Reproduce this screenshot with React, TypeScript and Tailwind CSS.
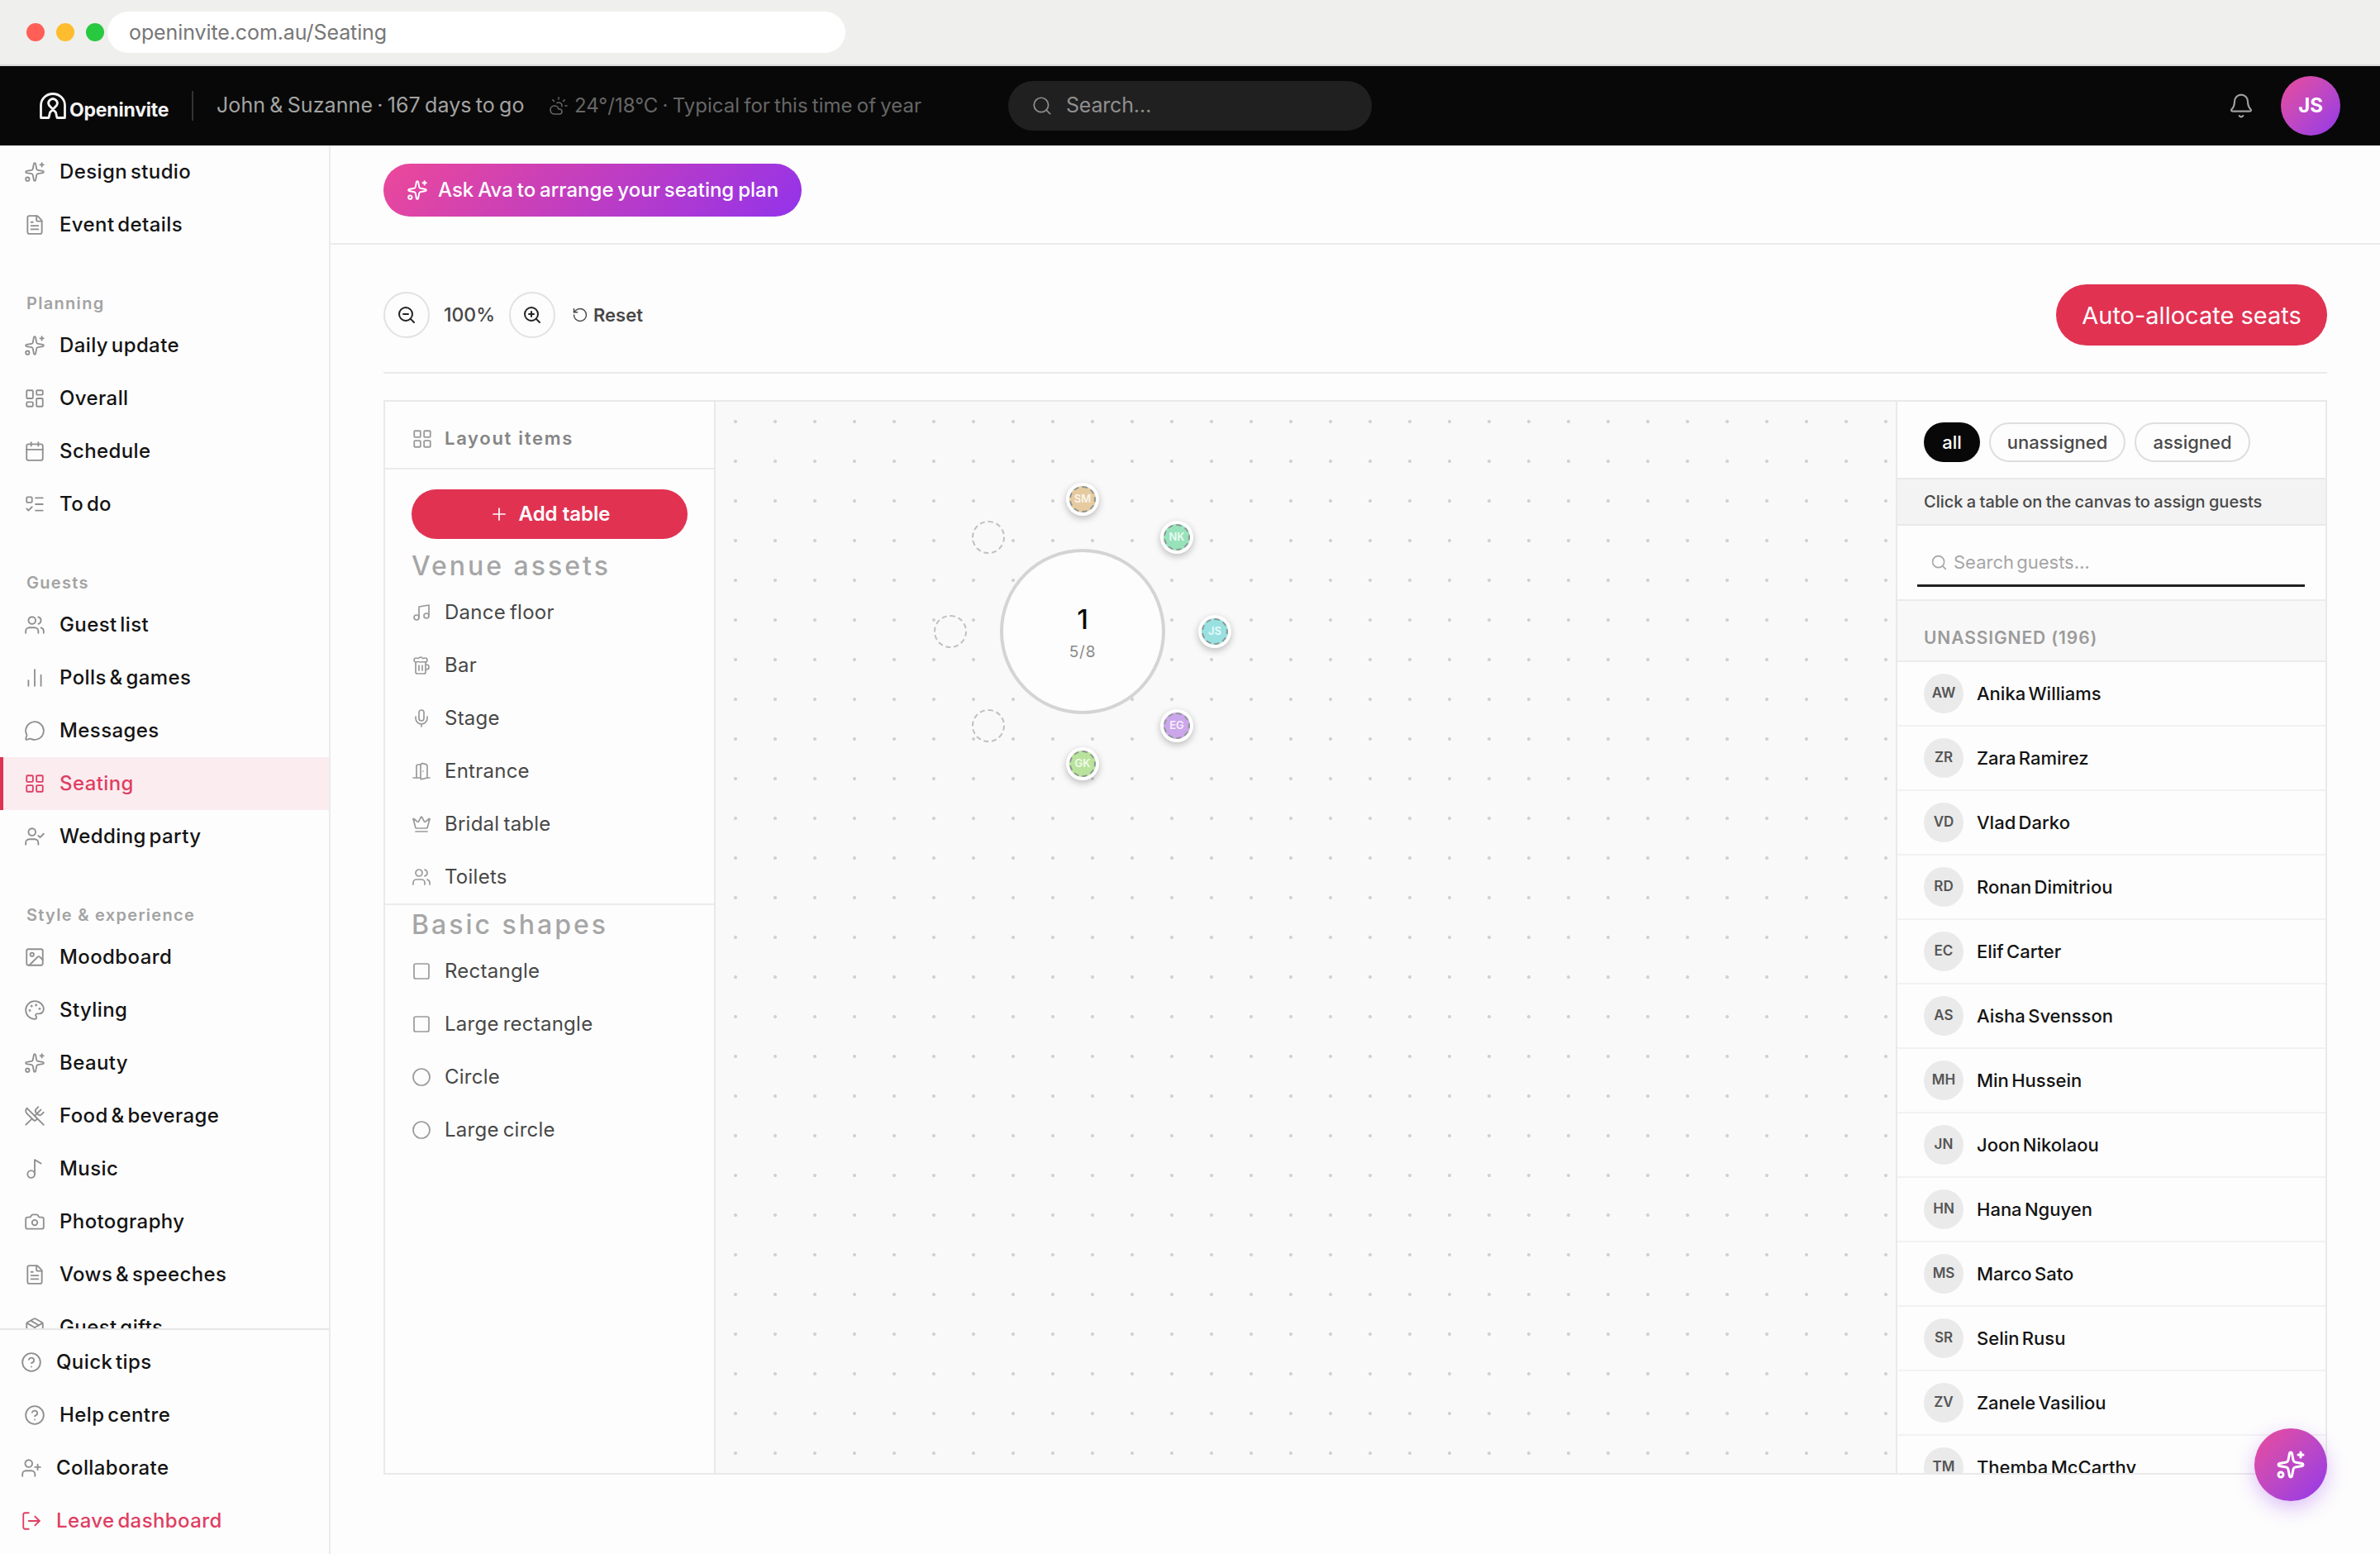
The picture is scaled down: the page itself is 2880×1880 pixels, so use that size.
import React from "react";
import {
  Beer, Bell, Calendar, Camera, ChartNoAxesColumn, Circle, CircleHelp, CloudSun, Crown, DoorOpen, FileText,
  Image, LayoutDashboard, LayoutGrid, ListTodo, LogOut, MessageCircle, Mic, Music, Music2, Package, Palette,
  Plus, RotateCcw, Search, Sparkles, Square, UserCheck, UserPlus, Users, UtensilsCrossed, ZoomIn, ZoomOut,
  type LucideIcon,
} from "lucide-react";

type Item = { icon: LucideIcon; label: string; active?: boolean };

const sections: { title?: string; items: Item[] }[] = [
  { items: [{ icon: Sparkles, label: "Design studio" }, { icon: FileText, label: "Event details" }] },
  {
    title: "Planning",
    items: [
      { icon: Sparkles, label: "Daily update" },
      { icon: LayoutDashboard, label: "Overall" },
      { icon: Calendar, label: "Schedule" },
      { icon: ListTodo, label: "To do" },
    ],
  },
  {
    title: "Guests",
    items: [
      { icon: Users, label: "Guest list" },
      { icon: ChartNoAxesColumn, label: "Polls & games" },
      { icon: MessageCircle, label: "Messages" },
      { icon: LayoutGrid, label: "Seating", active: true },
      { icon: UserCheck, label: "Wedding party" },
    ],
  },
  {
    title: "Style & experience",
    items: [
      { icon: Image, label: "Moodboard" },
      { icon: Palette, label: "Styling" },
      { icon: Sparkles, label: "Beauty" },
      { icon: UtensilsCrossed, label: "Food & beverage" },
      { icon: Music2, label: "Music" },
      { icon: Camera, label: "Photography" },
      { icon: FileText, label: "Vows & speeches" },
      { icon: Package, label: "Guest gifts" },
    ],
  },
];

const venueAssets: Item[] = [
  { icon: Music, label: "Dance floor" },
  { icon: Beer, label: "Bar" },
  { icon: Mic, label: "Stage" },
  { icon: DoorOpen, label: "Entrance" },
  { icon: Crown, label: "Bridal table" },
  { icon: Users, label: "Toilets" },
];

const basicShapes: Item[] = [
  { icon: Square, label: "Rectangle" },
  { icon: Square, label: "Large rectangle" },
  { icon: Circle, label: "Circle" },
  { icon: Circle, label: "Large circle" },
];

const guests = [
  "Anika Williams", "Zara Ramirez", "Vlad Darko", "Ronan Dimitriou", "Elif Carter", "Aisha Svensson",
  "Min Hussein", "Joon Nikolaou", "Hana Nguyen", "Marco Sato", "Selin Rusu", "Zanele Vasiliou", "Themba McCarthy",
];

const initials = (name: string) => name.split(" ").map((part) => part[0]).join("");

const seats = [
  { initials: "SM", place: "left-[140px] top-[-20px]", color: "bg-[#e6cba0]" },
  { initials: "NK", place: "left-[254px] top-[26px]", color: "bg-[#98e2bb]" },
  { initials: "JS", place: "left-[300px] top-[140px]", color: "bg-[#98e1e0]" },
  { initials: "EG", place: "left-[254px] top-[254px]", color: "bg-[#cba6ea]" },
  { initials: "GK", place: "left-[140px] top-[300px]", color: "bg-[#b9e39c]" },
  { place: "left-[26px] top-[254px]" },
  { place: "left-[-20px] top-[140px]" },
  { place: "left-[26px] top-[26px]" },
];

function BrowserBar() {
  return (
    <div className="flex h-20 shrink-0 items-center border-b-2 border-[#d9d9d7] bg-[#efefed] pl-8">
      <div className="flex gap-3.5">
        <span className="size-[22px] rounded-full bg-[#ff5f57]" />
        <span className="size-[22px] rounded-full bg-[#febc2e]" />
        <span className="size-[22px] rounded-full bg-[#28c840]" />
      </div>
      <div className="ml-1 flex h-[50px] w-[893px] items-center rounded-[25px] bg-white pt-0.5 pl-[26px] text-[25px] tracking-[-0.1px] text-[#777]">
        openinvite.com.au/Seating
      </div>
    </div>
  );
}

function Logo() {
  return (
    <div className="flex w-[157px] items-center gap-1">
      <svg viewBox="0 0 32 32" className="size-8 shrink-0" fill="none" stroke="#f4f4f4" strokeWidth="2.8" strokeLinejoin="round">
        <path d="M1.5 30.5V15.5a14.5 14 0 0 1 29 0v15H21l-1.5-6.5-8-8.5a5.2 5.2 0 1 1 9 0l-8 8.5-1.5 6.5z" />
      </svg>
      <span className="mt-2.5 text-[23px] leading-none font-bold tracking-[-0.2px] text-[#f4f4f4]">Openinvite</span>
    </div>
  );
}

function Header() {
  return (
    <header className="flex h-24 shrink-0 items-center bg-[#080808] pl-12">
      <div className="flex w-[1172px] items-center">
        <Logo />
        <span className="ml-[27px] h-9 w-0.5 bg-[#333]" />
        <span className="ml-7 w-[402px] text-[25px] tracking-[0.1px] whitespace-nowrap text-[#a3a3a3] [word-spacing:-2px]">
          John &amp; Suzanne · 167 days to go
        </span>
        <CloudSun className="size-6 text-[#666]" strokeWidth={1.6} />
        <span className="ml-[7px] text-[24px] whitespace-nowrap text-[#666] [word-spacing:-1.5px]">
          24°/18°C · Typical for this time of year
        </span>
      </div>
      <div className="flex h-[60px] w-[440px] items-center rounded-full bg-[#202020] pl-[28px] text-[25px] tracking-[-0.2px] text-[#8f8f8f]">
        <Search className="mr-[16px] size-[26px]" strokeWidth={1.6} />
        Search…
      </div>
      <Bell className="ml-auto size-8 text-[#a0a0a0]" strokeWidth={1.6} />
      <div className="mr-12 ml-8 flex size-[72px] items-center justify-center rounded-full bg-linear-to-br from-[#ec4899] to-[#9333ea] text-[24px] font-bold text-white">
        JS
      </div>
    </header>
  );
}

function NavRow({ icon: Icon, label, active }: Item) {
  return (
    <div
      className={
        active
          ? "flex h-16 shrink-0 items-center border-l-4 border-[#e03252] bg-[#fbecf0] pl-[25px] text-[#e03e62]"
          : "flex h-16 shrink-0 items-center pl-[29px] text-[#141414]"
      }
    >
      <Icon className={active ? "size-[26px]" : "size-[26px] text-[#8f8f8f]"} strokeWidth={1.7} />
      <span className="ml-[17px] text-[24px] font-medium tracking-[0.4px] [word-spacing:-3px]">{label}</span>
    </div>
  );
}

function FooterRow({ icon: Icon, label, tone, offset }: Item & { tone?: string; offset: string }) {
  return (
    <div className={`flex h-16 shrink-0 items-center ${offset} ${tone ?? "text-[#141414]"}`}>
      <Icon className={tone ? "size-[26px]" : "size-[26px] text-[#8f8f8f]"} strokeWidth={1.7} />
      <span className="ml-[17px] text-[24px] font-medium tracking-[0.4px] [word-spacing:-3px]">{label}</span>
    </div>
  );
}

function Sidebar() {
  return (
    <aside className="flex w-[400px] shrink-0 flex-col border-r-2 border-[#ebebeb] bg-[#fdfdfd]">
      <nav className="flex min-h-0 flex-1 flex-col overflow-hidden">
        {sections.map((section) => (
          <React.Fragment key={section.title ?? "top"}>
            {section.title && (
              <div className="h-[82px] shrink-0 pt-[49px] pl-8 text-[20px] leading-[28px] font-semibold tracking-[1.3px] text-[#a3a3a3]">
                {section.title}
              </div>
            )}
            {section.items.map((item) => (
              <NavRow key={item.label} {...item} />
            ))}
          </React.Fragment>
        ))}
      </nav>
      <div className="h-[273px] shrink-0 border-t-2 border-[#e6e6e6] pt-[7px]">
        <FooterRow icon={CircleHelp} label="Quick tips" offset="pl-[25px]" />
        <FooterRow icon={CircleHelp} label="Help centre" offset="pl-[29px]" />
        <FooterRow icon={UserPlus} label="Collaborate" offset="pl-[25px]" />
        <FooterRow icon={LogOut} label="Leave dashboard" offset="pl-[25px]" tone="text-[#e03e62]" />
      </div>
    </aside>
  );
}

function AssetRow({ icon: Icon, label }: Item) {
  return (
    <div className="flex h-16 items-center pl-8 text-[#484848]">
      <Icon className="size-6 text-[#9a9a9a]" strokeWidth={1.7} />
      <span className="ml-4 text-[24px] tracking-[0.25px] [word-spacing:-2px]">{label}</span>
    </div>
  );
}

function LayoutPanel() {
  return (
    <div className="flex w-[400px] shrink-0 flex-col border-r-2 border-[#e9e9e9] bg-[#fdfdfd]">
      <div className="flex h-[82px] items-center border-b-2 border-[#ebebeb] pt-[9px] pl-8 text-[22px] font-semibold tracking-[1.7px] text-[#858585]">
        <LayoutGrid className="mr-[14px] size-[26px] text-[#9a9a9a]" strokeWidth={1.7} />
        Layout items
      </div>
      <button className="mx-8 mt-6 flex h-[60px] items-center justify-center rounded-full bg-[#e13252] text-[24px] font-semibold text-white">
        <Plus className="mr-3 size-6" strokeWidth={1.7} />
        Add table
      </button>
      <div className="mt-[9px] flex h-12 items-center pl-8 text-[32px] font-medium tracking-[3px] text-[#a6a6a6]">Venue assets</div>
      {venueAssets.map((item) => (
        <AssetRow key={item.label} {...item} />
      ))}
      <div className="flex h-[50px] items-center border-t-2 border-[#ebebeb] pl-8 text-[32px] font-medium tracking-[3px] text-[#a6a6a6]">
        Basic shapes
      </div>
      {basicShapes.map((item) => (
        <AssetRow key={item.label} {...item} />
      ))}
    </div>
  );
}

function Canvas() {
  return (
    <div className="relative flex-1 bg-[#f9f9f9] bg-[radial-gradient(circle,#d2d2d2_1.6px,transparent_2.4px)] bg-size-[48px_48px]">
      <div className="absolute top-[118px] left-[284px] size-[320px]">
        <div className="absolute top-[60px] left-[60px] flex size-[200px] flex-col items-center justify-center rounded-full border-4 border-[#d4d4d4] bg-[#fdfdfd] pt-1.5">
          <span className="text-[33px] leading-10 font-medium text-[#0a0a0a]">1</span>
          <span className="mt-1 text-[19px] leading-8 tracking-[0.8px] text-[#8a8a8a]">5/8</span>
        </div>
        {seats.map((seat) =>
          seat.initials ? (
            <div key={seat.place} className={`absolute size-10 rounded-full bg-white p-1 shadow-[0_3px_8px_rgba(0,0,0,0.25)] ${seat.place}`}>
              <div className={`flex size-8 items-center justify-center rounded-full border-2 border-dashed border-[#8b9690] text-[13px] font-semibold text-white/80 ${seat.color}`}>
                {seat.initials}
              </div>
            </div>
          ) : (
            <div key={seat.place} className={`absolute size-10 rounded-full border-2 border-dashed border-[#c0c0c0] bg-[#f9f9f9] ${seat.place}`} />
          ),
        )}
      </div>
    </div>
  );
}

function GuestPanel() {
  return (
    <div className="flex w-[520px] shrink-0 flex-col overflow-hidden border-l-2 border-[#e9e9e9] bg-[#fdfdfd]">
      <div className="flex h-[92px] shrink-0 gap-[11px] pt-[25px] pl-8 text-[22px] text-[#4a4a4a]">
        <span className="flex h-12 w-[68px] items-center justify-center rounded-full bg-[#080808] font-medium text-white">all</span>
        <span className="flex h-12 w-[165px] items-center justify-center rounded-full border-2 border-[#dedede] font-medium">unassigned</span>
        <span className="flex h-12 w-[140px] items-center justify-center rounded-full border-2 border-[#dedede] font-medium">assigned</span>
      </div>
      <div className="flex h-[58px] shrink-0 items-center border-y-2 border-[#e9e9e9] bg-[#f3f3f3] pl-8 text-[20px] font-medium text-[#484848] [word-spacing:-1px]">
        Click a table on the canvas to assign guests
      </div>
      <div className="h-[89px] shrink-0 pt-[18px] pr-[25px] pl-6">
        <div className="flex h-[56px] items-center border-b-[3px] border-[#222] pl-4 text-[22px] text-[#a6a6a6] [word-spacing:-3px]">
          <Search className="mr-[7px] size-[21px]" strokeWidth={1.8} />
          Search guests…
        </div>
      </div>
      <div className="flex h-[76px] shrink-0 items-center border-y-2 border-[#ebebeb] bg-[#f8f8f8] pt-[17px] pl-8 text-[21px] font-semibold tracking-[0.9px] text-[#9b9b9b]">
        UNASSIGNED (196)
      </div>
      {guests.map((name) => (
        <div key={name} className="flex h-[78px] shrink-0 items-center border-b-2 border-[#f2f2f2] pl-8">
          <span className="mr-4 flex size-12 items-center justify-center rounded-full bg-[#eaeaea] text-[17px] font-semibold text-[#555]">
            {initials(name)}
          </span>
          <span className="text-[22px] font-medium text-[#141414] [word-spacing:-2.5px]">{name}</span>
        </div>
      ))}
    </div>
  );
}

function Toolbar() {
  return (
    <div className="mx-16 flex h-[156px] shrink-0 items-center border-b-2 border-[#ebebeb] pt-4">
      <button className="flex size-14 items-center justify-center rounded-full border-2 border-[#e2e2e2] text-[#222]">
        <ZoomOut className="size-6" strokeWidth={2} />
      </button>
      <span className="w-24 text-center text-[23px] font-medium text-[#484848]">100%</span>
      <button className="flex size-14 items-center justify-center rounded-full border-2 border-[#e2e2e2] text-[#222]">
        <ZoomIn className="size-6" strokeWidth={2} />
      </button>
      <button className="ml-5 flex items-center gap-1.5 text-[22px] font-semibold text-[#484848]">
        <RotateCcw className="size-5" strokeWidth={1.7} />
        Reset
      </button>
      <button className="ml-auto flex h-[74px] w-[328px] items-center justify-center rounded-full bg-[#e13252] pt-0.5 text-[29px] text-white">
        Auto-allocate seats
      </button>
    </div>
  );
}

export default function App() {
  return (
    <div className="relative flex h-[1880px] w-[2880px] flex-col overflow-hidden bg-[#fdfdfd] font-['Inter',sans-serif]">
      <BrowserBar />
      <Header />
      <div className="flex min-h-0 flex-1">
        <Sidebar />
        <main className="flex min-w-0 flex-1 flex-col">
          <div className="h-[120px] shrink-0 border-b-2 border-[#ebebeb] pt-[22px] pl-16">
            <button className="flex h-16 w-[506px] items-center rounded-full bg-[linear-gradient(135deg,#ec4899,#9333ea)] pl-7 text-[24px] font-medium whitespace-nowrap text-white [word-spacing:-1.5px]">
              <Sparkles className="mr-3 size-[26px]" strokeWidth={1.8} />
              Ask Ava to arrange your seating plan
            </button>
          </div>
          <Toolbar />
          <div className="mx-16 mt-8 flex h-[1300px] shrink-0 border-2 border-[#e9e9e9]">
            <LayoutPanel />
            <Canvas />
            <GuestPanel />
          </div>
        </main>
      </div>
      <button className="absolute right-16 bottom-16 flex size-[88px] items-center justify-center rounded-full bg-linear-to-br from-[#ec4899] to-[#9333ea] text-white shadow-[0_8px_24px_rgba(147,51,234,0.3)]">
        <Sparkles className="size-9" strokeWidth={2} />
      </button>
    </div>
  );
}
